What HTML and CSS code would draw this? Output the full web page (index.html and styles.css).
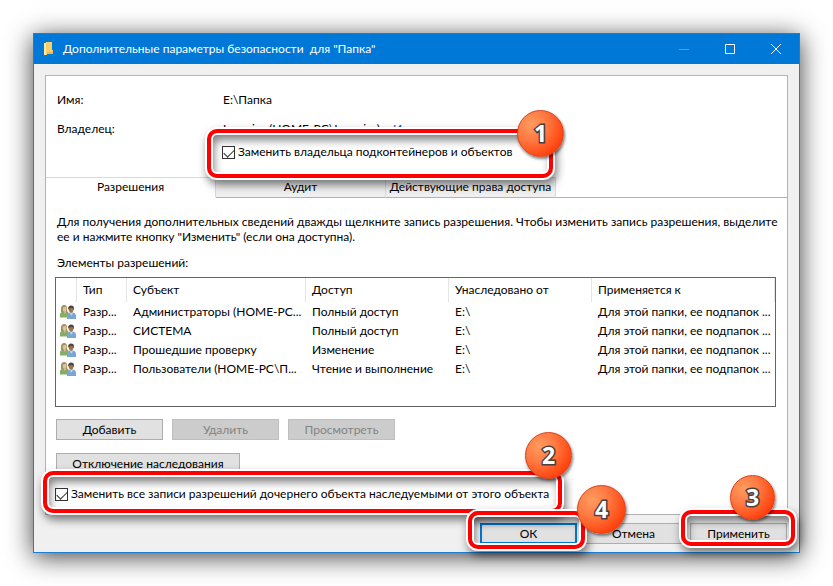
FILE: index.html
```html
<!DOCTYPE html>
<html lang="ru">
<head>
    <meta charset="UTF-8">
    <title>Дополнительные параметры безопасности для "Папка"</title>
    <link rel="stylesheet" href="styles.css">
</head>
<body>
<!-- people icon used in every table row -->
<svg class="sprite" aria-hidden="true">
    <symbol id="users" viewBox="0 0 16 14">
        <path d="M0 12.500V9.500c0-1.500 1-2.300 2.500-2.700L5 6.300l2.500.5C8.700 7.300 9 9 9 12.500z" fill="#84ad66"/>
        <path d="M1 7V3.500C1 1.300 2.300 0 4.200 0 6 0 7 1.200 7 3l.3 4-1.800.6-2.500-.1z" fill="#a3905f"/>
        <path d="M2.800 2.500c1 0 2-.4 2.500-1 .8.500 1.200 1.500 1.200 2.600C6.500 5.700 5.700 7 4.700 7S2.800 5.600 2.800 4z" fill="#dfc3a0"/>
        <path d="M3.500 6.500h2.300v1.200L4.700 9z" fill="#d8b78f"/>
        <path d="M7 14v-3C7 9 8 7.800 10 7.400h3c2 .4 3 1.600 3 3.600v3z" fill="#7ba6d0"/>
        <path d="M10 7.200h3l-.8 2.600-.8.600-.8-.6z" fill="#c3d8ea"/>
        <path d="M8 4C8 1.600 9.300.4 11 .4c2 0 3.200 1.200 3 3.400L13.700 5z" fill="#4d453d"/>
        <path d="M8.400 3.500c1 .1 2.500-.2 3.300-.8l1.900 1C13.500 6 12.600 7.800 11.200 7.800S8.400 6 8.400 3.500z" fill="#9a744f"/>
    </symbol>
</svg>

<div class="window">
    <header class="title-bar">
        <svg class="folder" viewBox="0 0 10 14" aria-hidden="true">
            <path d="M0 1h2v-1h6v8h1v4H3v1H0z" fill="#f5cf6b"/>
            <path d="M0 1h2v12H0z" fill="#ffe9a6"/>
            <path d="M3 11l1-1h5v2H3z" fill="#e9b94c"/>
        </svg>
        <h1>Дополнительные параметры безопасности&nbsp; для "Папка"</h1>
        <div class="controls">
            <button aria-label="Свернуть" disabled><svg viewBox="0 0 10 10"><path d="M0 5.500h10"/></svg></button>
            <button aria-label="Развернуть"><svg viewBox="0 0 10 10"><path d="M.5.5h9v9h-9z"/></svg></button>
            <button aria-label="Закрыть"><svg viewBox="0 0 10 10"><path d="M0 0l10 10M10 0L0 10"/></svg></button>
        </div>
    </header>

    <main class="panel">
        <section class="owner">
            <dl>
                <dt>Имя:</dt>
                <dd>E:\Папка</dd>
                <dt>Владелец:</dt>
                <dd>Lumpics (HOME-PC\Lumpics) <a href="#">Изменить</a></dd>
            </dl>
            <div class="check-row owner-check">
                <input type="checkbox" id="replace-owner" checked>
                <label for="replace-owner">Заменить владельца подконтейнеров и объектов</label>
                <span class="frame frame-1"></span>
                <span class="badge badge-1">1</span>
            </div>
        </section>

        <nav class="tabs">
            <button class="active">Разрешения</button>
            <button>Аудит</button>
            <button>Действующие права доступа</button>
        </nav>

        <section class="permissions">
            <p class="hint">Для получения дополнительных сведений дважды щелкните запись разрешения. Чтобы изменить запись разрешения, выделите ее и нажмите кнопку "Изменить" (если она доступна).</p>
            <p class="list-title">Элементы разрешений:</p>
            <div class="list">
                <table>
                    <colgroup>
                        <col class="col-icon">
                        <col class="col-type">
                        <col class="col-subject">
                        <col class="col-access">
                        <col class="col-access">
                        <col>
                    </colgroup>
                    <thead>
                    <tr>
                        <th></th>
                        <th>Тип</th>
                        <th>Субъект</th>
                        <th>Доступ</th>
                        <th>Унаследовано от</th>
                        <th>Применяется к</th>
                    </tr>
                    </thead>
                    <tbody>
                    <tr>
                        <td><svg><use href="#users"/></svg></td>
                        <td>Разр...</td>
                        <td>Администраторы (HOME-PC...</td>
                        <td>Полный доступ</td>
                        <td>E:\</td>
                        <td>Для этой папки, ее подпапок ...</td>
                    </tr>
                    <tr>
                        <td><svg><use href="#users"/></svg></td>
                        <td>Разр...</td>
                        <td>СИСТЕМА</td>
                        <td>Полный доступ</td>
                        <td>E:\</td>
                        <td>Для этой папки, ее подпапок ...</td>
                    </tr>
                    <tr>
                        <td><svg><use href="#users"/></svg></td>
                        <td>Разр...</td>
                        <td>Прошедшие проверку</td>
                        <td>Изменение</td>
                        <td>E:\</td>
                        <td>Для этой папки, ее подпапок ...</td>
                    </tr>
                    <tr>
                        <td><svg><use href="#users"/></svg></td>
                        <td>Разр...</td>
                        <td>Пользователи (HOME-PC\П...</td>
                        <td>Чтение и выполнение</td>
                        <td>E:\</td>
                        <td>Для этой папки, ее подпапок ...</td>
                    </tr>
                    </tbody>
                </table>
            </div>
            <div class="actions">
                <button class="btn">Добавить</button>
                <button class="btn" disabled>Удалить</button>
                <button class="btn" disabled>Просмотреть</button>
            </div>
            <button class="btn btn-inherit">Отключение наследования</button>
            <div class="check-row">
                <input type="checkbox" id="replace-children" checked>
                <label for="replace-children">Заменить все записи разрешений дочернего объекта наследуемыми от этого объекта</label>
                <span class="frame frame-2"></span>
                <span class="badge badge-2">2</span>
            </div>
        </section>
    </main>

    <footer class="bottom">
        <div class="slot">
            <button class="btn btn-default">ОК</button>
            <span class="frame frame-4"></span>
            <span class="badge badge-4">4</span>
        </div>
        <div class="slot">
            <button class="btn">Отмена</button>
        </div>
        <div class="slot">
            <button class="btn">Применить</button>
            <span class="frame frame-3"></span>
            <span class="badge badge-3">3</span>
        </div>
    </footer>
</div>
</body>
</html>
```

FILE: styles.css
```css
* {
    box-sizing: border-box;
}

body {
    margin: 0;
    padding: 33px;
    background-color: #fff;
    color: #000;
    font: 12px/16px Lato, "Noto Sans", sans-serif;
}

button {
    font: inherit;
    color: inherit;
    padding: 0;
}

p, h1, dl, dd {
    margin: 0;
}

.sprite {
    display: none;
}

.window {
    border: 1px solid #1a7fd4;
    background-color: #f0f0f0;
    box-shadow: 0 4px 24px rgba(0, 0, 0, .75);
}

/* title bar */
.title-bar {
    display: flex;
    align-items: center;
    height: 30px;
    padding-left: 10px;
    background-color: #0078d7;
    color: #fff;
}

.folder {
    width: 10px;
    height: 14px;
    margin-right: 9px;
}

.title-bar h1 {
    flex: 1;
    font-size: 12px;
    font-weight: normal;
    white-space: nowrap;
}

.controls {
    display: flex;
}

.controls button {
    width: 46px;
    height: 30px;
    border: 0;
    background: none;
    line-height: 0;
}

.controls svg {
    width: 10px;
    height: 10px;
    fill: none;
    stroke: #fff;
}

.controls button:disabled {
    opacity: .3;
}

/* main panel */
.panel {
    margin: 11px 11px 0;
    border: 1px solid #b2b2b2;
    background-color: #fff;
}

.owner {
    height: 101px;
    padding: 16px 11px 0;
}

.owner dl {
    display: grid;
    grid-template-columns: 166px 1fr;
    row-gap: 13px;
}

.owner a {
    margin-left: 10px;
    color: #0066cc;
    text-decoration: none;
}

.check-row {
    position: relative;
    display: flex;
    align-items: center;
    gap: 3px;
    height: 16px;
}

.owner-check {
    margin: 7px 0 0 165px;
}

.check-row input {
    appearance: none;
    flex: none;
    width: 13px;
    height: 13px;
    margin: 0;
    border: 1px solid #333;
    background-color: #fff;
}

.check-row input:checked::after {
    content: "";
    display: block;
    width: 9px;
    height: 5px;
    margin: 2px 0 0 1px;
    border: solid #333;
    border-width: 0 0 1px 1px;
    transform: rotate(-45deg);
}

/* tabs */
.tabs {
    display: flex;
    height: 21px;
    box-shadow: inset 0 -1px #b2b2b2;
}

.tabs button {
    width: 170px;
    padding-bottom: 2px;
    border: 1px solid #d9d9d9;
    border-width: 1px 1px 0 0;
    border-bottom: 1px solid #b2b2b2;
    background-color: #f0f0f0;
    white-space: nowrap;
}

.tabs .active {
    border-bottom-color: #fff;
    background-color: #fff;
}

.permissions {
    padding: 16px 11px 12px 9px;
}

.hint {
    margin-right: -6px;
    padding-left: 2px;
    line-height: 15px;
}

.list-title {
    margin: 11px 0 6px;
    padding-left: 2px;
}

.list {
    height: 130px;
    border: 1px solid #646464;
}

table {
    width: 100%;
    table-layout: fixed;
    border-spacing: 0;
}

.col-icon {
    width: 21px;
}

.col-type {
    width: 50px;
}

.col-subject {
    width: 179px;
}

.col-access {
    width: 143px;
}

th, td {
    height: 19px;
    padding: 0 0 0 6px;
    border-right: 1px solid transparent;
    font-weight: normal;
    text-align: left;
    white-space: nowrap;
}

th {
    height: 24px;
    border-color: #e5e5e5;
}

td:first-child {
    padding-left: 4px;
}

td svg {
    display: block;
    width: 16px;
    height: 14px;
}

/* buttons */
.btn {
    width: 107px;
    height: 21px;
    border: 1px solid #adadad;
    background-color: #e1e1e1;
    line-height: 16px;
    white-space: nowrap;
}

.btn:disabled {
    border-color: #bfbfbf;
    background-color: #ccc;
    color: #838383;
}

.actions {
    display: flex;
    gap: 9px;
    margin: 12px 0 13px;
    padding-left: 1px;
}

.btn-inherit {
    display: block;
    width: 184px;
    margin: 0 0 12px 1px;
}

.bottom {
    display: flex;
    justify-content: flex-end;
    gap: 8px;
    padding: 8px 12px;
}

.slot {
    position: relative;
}

.slot .btn {
    display: block;
    width: 97px;
}

.slot .btn-default {
    border: 2px solid #0078d7;
}

/* numbered marks over the dialog */
.frame {
    position: absolute;
    z-index: 1;
    border: 4px solid #f00;
    border-radius: 10px;
    box-shadow: 0 0 0 2px #fff, inset 0 0 0 2px #fff, 2px 5px 8px 2px rgba(0, 0, 0, .5), inset 2px 6px 8px 1px rgba(0, 0, 0, .5);
    pointer-events: none;
}

.badge {
    position: absolute;
    z-index: 2;
    width: 47px;
    height: 47px;
    border: 1px solid #d8401c;
    border-radius: 50%;
    background: radial-gradient(circle at 30% 30%, #ff9c60, #ff7a42 35%, #ff3c08 80%);
    box-shadow: 1px 2px 3px rgba(0, 0, 0, .5);
    color: #fff;
    font: bold 23px/45px "Open Sans", "Noto Sans", sans-serif;
    text-align: center;
    -webkit-text-stroke: 3px #4a4040;
    paint-order: stroke fill;
}

.frame-1 {
    top: -15px;
    left: -15px;
    width: 346px;
    height: 49px;
}

.badge-1 {
    top: -34px;
    left: 295px;
}

.frame-2 {
    top: -15px;
    left: -12px;
    width: 519px;
    height: 42px;
}

.badge-2 {
    top: -54px;
    left: 470px;
}

.frame-3 {
    inset: -13px -8px -2px -9px;
}

.badge-3 {
    top: -48px;
    left: 40px;
    width: 45px;
    height: 45px;
    line-height: 43px;
}

.frame-4 {
    inset: -12px -8px -5px -12px;
}

.badge-4 {
    top: -38px;
    left: 97px;
    width: 49px;
    height: 49px;
    line-height: 47px;
}
```
